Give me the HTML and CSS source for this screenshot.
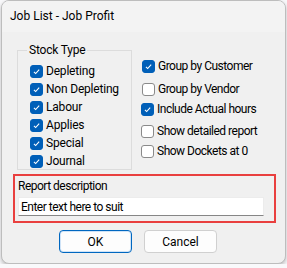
FILE: index.html
```html
<!DOCTYPE html>
<html lang="en">
<head>
  <meta charset="UTF-8">
  <title>Job List - Job Profit</title>
  <link rel="stylesheet" href="styles.css">
</head>
<body>
  <div class="window">
    <div class="titlebar">Job List - Job Profit</div>
    <div class="dialog">
      <div class="options">
        <fieldset class="stock-type">
          <legend>Stock Type</legend>
          <div class="check-list">
            <label class="check"><span class="box on"><svg viewBox="0 0 12 12"><path d="M3.2 6.3l1.9 1.9 3.8-4.2"/></svg></span>Depleting</label>
            <label class="check"><span class="box on"><svg viewBox="0 0 12 12"><path d="M3.2 6.3l1.9 1.9 3.8-4.2"/></svg></span>Non Depleting</label>
            <label class="check"><span class="box on"><svg viewBox="0 0 12 12"><path d="M3.2 6.3l1.9 1.9 3.8-4.2"/></svg></span>Labour</label>
            <label class="check"><span class="box on"><svg viewBox="0 0 12 12"><path d="M3.2 6.3l1.9 1.9 3.8-4.2"/></svg></span>Applies</label>
            <label class="check"><span class="box on"><svg viewBox="0 0 12 12"><path d="M3.2 6.3l1.9 1.9 3.8-4.2"/></svg></span>Special</label>
            <label class="check"><span class="box on"><svg viewBox="0 0 12 12"><path d="M3.2 6.3l1.9 1.9 3.8-4.2"/></svg></span>Journal</label>
          </div>
        </fieldset>

        <div class="grouping">
          <label class="check row-customer"><span class="box on"><svg viewBox="0 0 12 12"><path d="M3.2 6.3l1.9 1.9 3.8-4.2"/></svg></span>Group by Customer</label>
          <label class="check row-vendor"><span class="box"></span>Group by Vendor</label>
          <label class="check row-hours"><span class="box on"><svg viewBox="0 0 12 12"><path d="M3.2 6.3l1.9 1.9 3.8-4.2"/></svg></span>Include Actual hours</label>
          <label class="check row-detail"><span class="box"></span>Show detailed report</label>
          <label class="check row-dockets"><span class="box"></span>Show Dockets at 0</label>
        </div>
      </div>

      <div class="report">
        <div class="report-label">Report description</div>
        <div class="report-input">Enter text here to suit</div>
      </div>

      <div class="buttons">
        <button class="btn btn-default">OK</button>
        <button class="btn">Cancel</button>
      </div>
    </div>
  </div>
</body>
</html>
```

FILE: styles.css
```css
body {
  margin: 0;
  background: #f9f9fb;
  font-family: Roboto, "Liberation Sans", Arial, sans-serif;
  font-size: 12px;
  color: #000;
}

.window {
  box-sizing: border-box;
  width: 285px;
  height: 264px;
  margin-left: 1px;
  border: 1px solid #bdbdbd;
  border-radius: 8px;
  background: #f0f0f0;
  box-shadow: 0 2px 4px rgba(0, 0, 0, 0.25);
  overflow: hidden;
}

.titlebar {
  height: 31px;
  line-height: 30px;
  padding-left: 8px;
  background: #f3f3f3;
}

.dialog {
  padding-left: 11px;
  letter-spacing: -0.5px;
}

/* 上半部分：分组框 + 右侧选项 */
.options {
  display: flex;
  margin-left: 4px;
  padding-top: 11px;
}

.stock-type {
  box-sizing: border-box;
  width: 115px;
  height: 127px;
  margin: 0;
  padding: 0;
  border: 1px solid #dcdcdc;
}

.stock-type legend {
  margin-left: 9px;
  padding: 0 2px;
  line-height: 14px;
  letter-spacing: -0.2px;
}

.check-list {
  padding: 5px 0 0 12px;
  letter-spacing: -0.2px;
}

.check {
  display: flex;
  align-items: center;
  height: 18px;
  white-space: nowrap;
}

.box {
  box-sizing: border-box;
  width: 13px;
  height: 13px;
  margin-right: 3px;
  border: 1px solid #8a8a8a;
  border-radius: 3px;
  background: #fff;
  flex: none;
}

.box.on {
  border-color: #005fb8;
  background: #005fb8;
}

.box svg {
  display: block;
  width: 11px;
  height: 11px;
  fill: none;
  stroke: #fff;
  stroke-width: 1.2;
}

.grouping {
  margin-left: 10px;
}

.row-customer { margin-top: 14px; }
.row-vendor { margin-top: 5px; }
.row-hours { margin-top: 2px; margin-left: -1px; }
.row-detail { margin-top: 4px; margin-left: -1px; }
.row-dockets { margin-top: 2px; margin-left: -1px; }

/* 报表描述 */
.report {
  box-sizing: border-box;
  width: 263px;
  height: 49px;
  margin-top: 4px;
  padding: 3px 0 0 3px;
  border: 2px solid #e9403f;
}

.report-label {
  line-height: 14px;
}

.report-input {
  box-sizing: border-box;
  width: 246px;
  height: 19px;
  margin-top: 4px;
  padding-left: 2px;
  line-height: 18px;
  background: #fff;
  border: 1px solid #ececec;
  border-bottom-color: #868686;
}

/* 按钮 */
.buttons {
  display: flex;
  gap: 12px;
  margin-top: 7px;
  padding-left: 46px;
}

.btn {
  box-sizing: border-box;
  width: 73px;
  height: 23px;
  padding: 0;
  font-family: inherit;
  font-size: 12px;
  color: #000;
  background: #fdfdfd;
  border: 1px solid #d0d0d0;
  border-radius: 4px;
}

.btn-default {
  border: 1px solid #0067c0;
  box-shadow: inset 0 0 0 1px #cfe3f7;
}
```
